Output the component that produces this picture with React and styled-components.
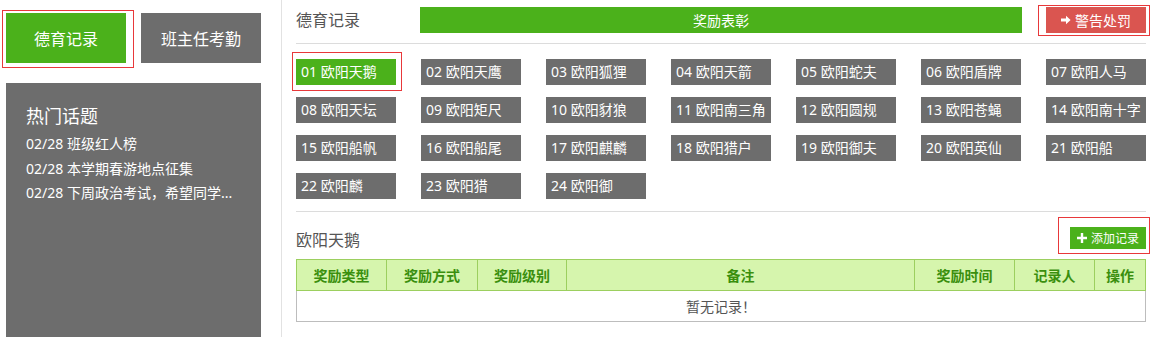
import React from 'react'
import styled, { createGlobalStyle } from 'styled-components'

const GlobalStyle = createGlobalStyle`
  html, body {
    margin: 0;
    padding: 0;
    background: #fff;
    font-family: "Noto Sans", "Noto Sans CJK SC", sans-serif;
    overflow: hidden;
  }
  * { box-sizing: border-box; }
`

const Page = styled.div`
  display: flex;
  min-height: 100vh;
`

const Sidebar = styled.aside`
  width: 282px;
  flex-shrink: 0;
  padding: 13px 0 0 6px;
  border-right: 1px solid #e2e2e2;
`

const TabRow = styled.div`
  display: flex;
  gap: 15px;
`

const Tab = styled.div`
  width: 120px;
  height: 50px;
  display: flex;
  align-items: center;
  justify-content: center;
  color: #fff;
  font-size: 16px;
  background: ${(p) => (p.$active ? '#4bb11b' : '#6d6d6d')};
`

const Marked = styled.div`
  position: relative;
  display: ${(p) => (p.$block ? 'block' : 'inline-block')};
  &::after {
    content: '';
    position: absolute;
    left: ${(p) => -p.$l}px;
    right: ${(p) => -p.$r}px;
    top: ${(p) => -p.$t}px;
    bottom: ${(p) => -p.$b}px;
    border: 1px solid #e8383a;
    pointer-events: none;
  }
`

const Panel = styled.div`
  margin-top: 20px;
  width: 255px;
  height: 254px;
  background: #6d6d6d;
  color: #fff;
  padding: 21px 0 0 20px;
`

const PanelTitle = styled.div`
  font-size: 18px;
  line-height: 24px;
  margin-bottom: 4px;
`

const Topic = styled.div`
  font-size: 14px;
  line-height: 24.5px;
  white-space: nowrap;
`

const Main = styled.main`
  flex: 1;
  padding: 7px 11px 0 14px;
`

const TopBar = styled.div`
  display: flex;
  align-items: center;
  height: 26px;
`

const Heading = styled.div`
  font-size: 16px;
  color: #555;
  line-height: 26px;
  width: 124px;
  flex-shrink: 0;
`

const AwardBar = styled.div`
  flex: 1;
  height: 26px;
  background: #4bb11b;
  color: #fff;
  font-size: 14px;
  display: flex;
  align-items: center;
  justify-content: center;
  margin-right: 24px;
`

const ActionButton = styled.div`
  width: ${(p) => p.$w}px;
  height: ${(p) => p.$h}px;
  background: ${(p) => p.$bg};
  color: #fff;
  font-size: ${(p) => p.$fs}px;
  display: flex;
  align-items: center;
  justify-content: center;
  gap: 4px;
  svg { display: block; }
`

const Rule = styled.div`
  height: 1px;
  background: #dcdcdc;
  margin: ${(p) => p.$m};
`

const StudentGrid = styled.div`
  display: grid;
  grid-template-columns: repeat(7, 100px);
  column-gap: 25px;
  row-gap: 12px;
`

const Student = styled.div`
  width: 100px;
  height: 26px;
  background: ${(p) => (p.$active ? '#4bb11b' : '#6d6d6d')};
  color: #fff;
  font-size: 14px;
  line-height: 26px;
  padding-left: 5px;
  white-space: nowrap;
  overflow: hidden;
`

const SectionHead = styled.div`
  display: flex;
  align-items: center;
  justify-content: space-between;
  height: 22px;
  margin-bottom: 10px;
`

const SubHeading = styled.div`
  font-size: 16px;
  color: #555;
  position: relative;
  top: 1px;
`

const Table = styled.table`
  width: 850px;
  border-collapse: collapse;
  table-layout: fixed;
  font-size: 14px;
`

const Th = styled.th`
  height: 31px;
  background: #d6f5ad;
  border: 1px solid #9ccf5f;
  color: #3a8f0e;
  font-weight: bold;
  padding: 0;
  width: ${(p) => (p.$w ? `${p.$w}px` : 'auto')};
`

const Td = styled.td`
  height: 31px;
  border: 1px solid #bdbdbd;
  color: #555;
  text-align: center;
  padding: 0;
`

const ArrowIcon = () => (
  <svg width="10" height="10" viewBox="0 0 10 10">
    <path d="M0 3.6h5V0.8L9.6 5 5 9.2V6.4H0z" fill="#fff" />
  </svg>
)

const PlusIcon = () => (
  <svg width="10" height="10" viewBox="0 0 10 10">
    <path d="M3.8 0h2.4v3.8H10v2.4H6.2V10H3.8V6.2H0V3.8h3.8z" fill="#fff" />
  </svg>
)

const topics = ['02/28 班级红人榜', '02/28 本学期春游地点征集', '02/28 下周政治考试，希望同学...']

const students = [
  '欧阳天鹅', '欧阳天鹰', '欧阳狐狸', '欧阳天箭', '欧阳蛇夫', '欧阳盾牌', '欧阳人马',
  '欧阳天坛', '欧阳矩尺', '欧阳豺狼', '欧阳南三角', '欧阳圆规', '欧阳苍蝇', '欧阳南十字',
  '欧阳船帆', '欧阳船尾', '欧阳麒麟', '欧阳猎户', '欧阳御夫', '欧阳英仙', '欧阳船',
  '欧阳麟', '欧阳猎', '欧阳御',
]

const columns = [
  { name: '奖励类型', w: 90 },
  { name: '奖励方式', w: 91 },
  { name: '奖励级别', w: 89 },
  { name: '备注' },
  { name: '奖励时间', w: 100 },
  { name: '记录人', w: 80 },
  { name: '操作', w: 51 },
]

function App() {
  return (
    <Page>
      <GlobalStyle />
      <Sidebar>
        <TabRow>
          <Marked $l={4} $r={8} $t={3} $b={5}>
            <Tab $active>德育记录</Tab>
          </Marked>
          <Tab>班主任考勤</Tab>
        </TabRow>
        <Panel>
          <PanelTitle>热门话题</PanelTitle>
          {topics.map((t) => (
            <Topic key={t}>{t}</Topic>
          ))}
        </Panel>
      </Sidebar>

      <Main>
        <TopBar>
          <Heading>德育记录</Heading>
          <AwardBar>奖励表彰</AwardBar>
          <Marked $l={8} $r={4} $t={2} $b={3}>
            <ActionButton $w={100} $h={26} $bg="#da5550" $fs={14}>
              <ArrowIcon />
              警告处罚
            </ActionButton>
          </Marked>
        </TopBar>

        <Rule $m="10px 0 15px" />

        <StudentGrid>
          {students.map((s, i) => {
            const label = `${String(i + 1).padStart(2, '0')} ${s}`
            return i === 0 ? (
              <Marked key={s} $block $l={4} $r={6} $t={7} $b={6}>
                <Student $active>{label}</Student>
              </Marked>
            ) : (
              <Student key={s}>{label}</Student>
            )
          })}
        </StudentGrid>

        <Rule $m="12px 0 15px" />

        <SectionHead>
          <SubHeading>欧阳天鹅</SubHeading>
          <Marked $l={12} $r={4} $t={10} $b={5}>
            <ActionButton $w={76} $h={22} $bg="#4bb11b" $fs={12}>
              <PlusIcon />
              添加记录
            </ActionButton>
          </Marked>
        </SectionHead>

        <Table>
          <thead>
            <tr>
              {columns.map((c) => (
                <Th key={c.name} $w={c.w}>{c.name}</Th>
              ))}
            </tr>
          </thead>
          <tbody>
            <tr>
              <Td colSpan={7}>暂无记录！</Td>
            </tr>
          </tbody>
        </Table>
      </Main>
    </Page>
  )
}

export default App
